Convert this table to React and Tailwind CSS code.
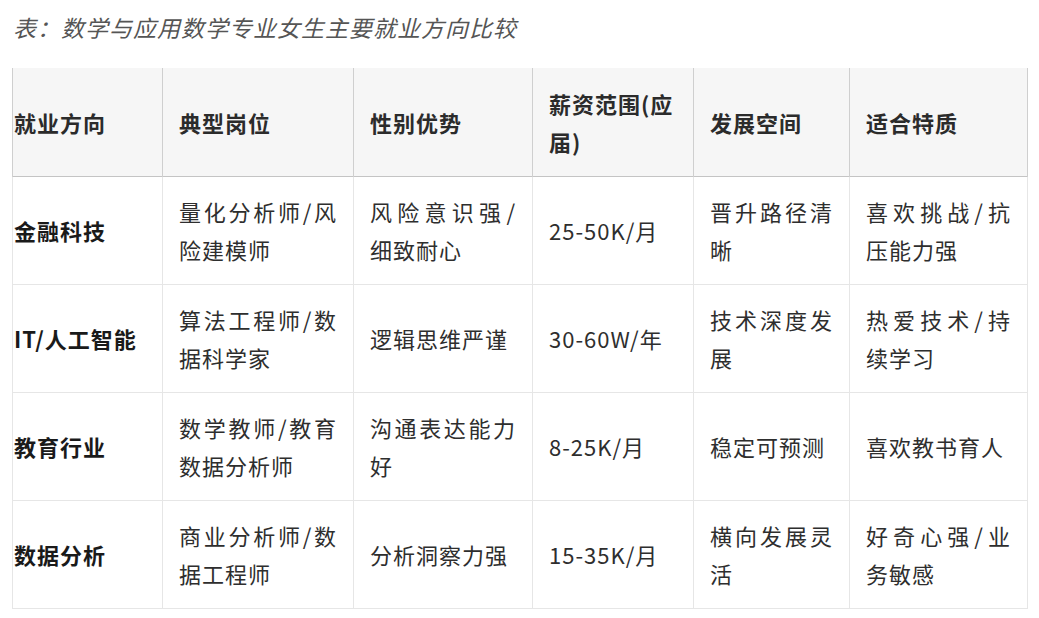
import React from "react";

const rows = [
  ["金融科技", "量化分析师/风险建模师", "风险意识强/细致耐心", "25-50K/月", "晋升路径清晰", "喜欢挑战/抗压能力强"],
  ["IT/人工智能", "算法工程师/数据科学家", "逻辑思维严谨", "30-60W/年", "技术深度发展", "热爱技术/持续学习"],
  ["教育行业", "数学教师/教育数据分析师", "沟通表达能力好", "8-25K/月", "稳定可预测", "喜欢教书育人"],
  ["数据分析", "商业分析师/数据工程师", "分析洞察力强", "15-35K/月", "横向发展灵活", "好奇心强/业务敏感"],
];

const heads = ["就业方向", "典型岗位", "性别优势", "薪资范围(应届)", "发展空间", "适合特质"];

export default function App() {
  return (
    <div
      className="min-h-screen bg-white pt-[11px] pl-[12px]"
      style={{ fontFamily: '"Noto Sans CJK SC", "Noto Sans", sans-serif' }}
    >
      <p className="text-[23px] leading-[32px] italic text-[#555] tracking-[1px] pl-[1px]">
        表：数学与应用数学专业女生主要就业方向比较
      </p>

      <table className="mt-[25px] w-[1015px] table-fixed border-collapse text-[22px] leading-[38px] tracking-[1px]">
        <colgroup>
          <col className="w-[150px]" />
          <col className="w-[191px]" />
          <col className="w-[179px]" />
          <col className="w-[161px]" />
          <col className="w-[156px]" />
          <col className="w-[178px]" />
        </colgroup>

        {/* Head */}
        <thead className="bg-[#f6f6f6]">
          <tr className="border-b border-[#c4c4c4]">
            {heads.map((h, i) => (
              <th
                key={h}
                className={`h-[108px] border-x border-[#cfcfcf] py-[15px] pr-4 text-left align-middle font-bold text-[#2b2b2b] ${
                  i === 0 ? "pl-[1px]" : "pl-4"
                }`}
              >
                {h}
              </th>
            ))}
          </tr>
        </thead>

        {/* Body */}
        <tbody>
          {rows.map((r) => (
            <tr key={r[0]} className="border-b border-[#e6e6e6]">
              {r.map((c, i) => (
                <td
                  key={i}
                  className={`h-[108px] border-x border-[#e6e6e6] py-[15px] pr-4 align-middle text-justify ${
                    i === 0 ? "pl-[1px] font-bold text-[#1a1a1a]" : "pl-4 text-[#2e2e2e]"
                  }`}
                >
                  {c}
                </td>
              ))}
            </tr>
          ))}
        </tbody>
      </table>
    </div>
  );
}
